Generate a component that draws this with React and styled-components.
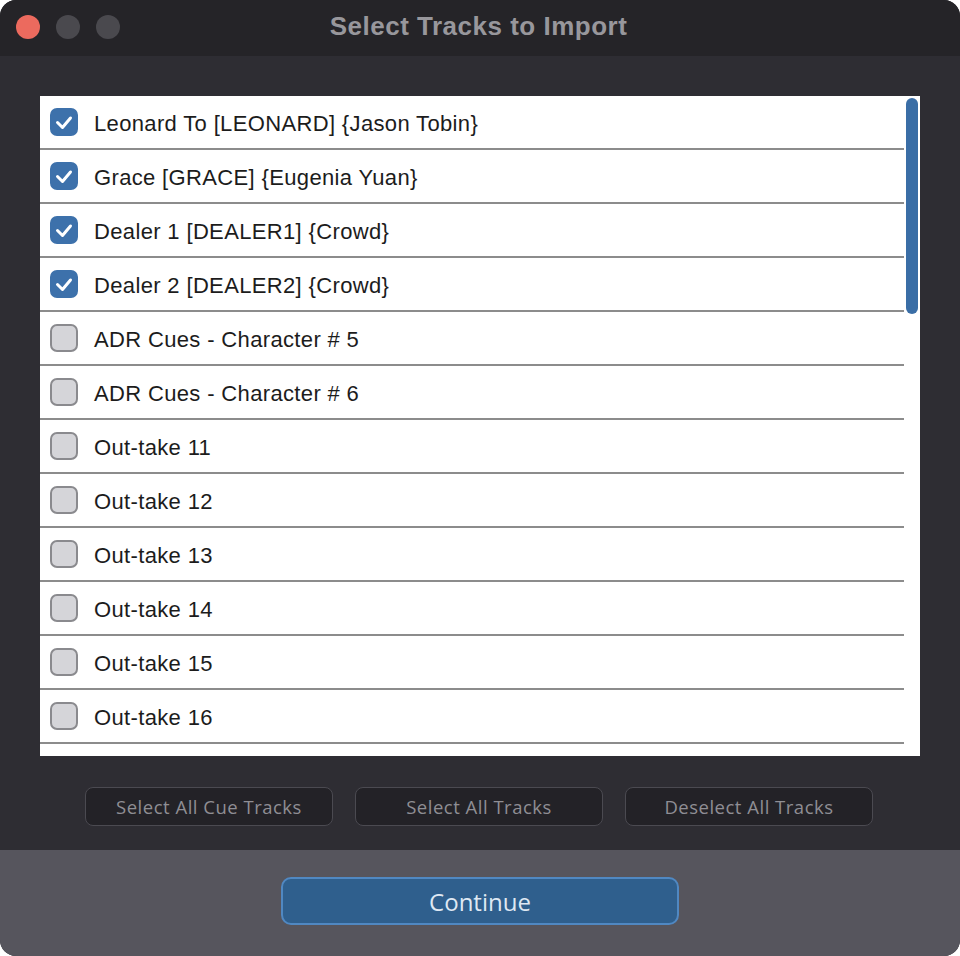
import React, { useState } from "react"
import styled, { createGlobalStyle } from "styled-components"

const GlobalStyle = createGlobalStyle`
  html, body {
    margin: 0;
    padding: 0;
    background: #ffffff;
  }
  * {
    box-sizing: border-box;
  }
`

const Window = styled.div`
  width: 960px;
  height: 956px;
  border-radius: 16px;
  overflow: hidden;
  display: flex;
  flex-direction: column;
  background: #2e2d33;
`

const TitleBar = styled.div`
  height: 56px;
  flex-shrink: 0;
  background: #252428;
  display: flex;
  align-items: center;
  justify-content: center;
  position: relative;
  padding-bottom: 3px;
`

const Lights = styled.div`
  position: absolute;
  left: 16px;
  top: 15px;
  display: flex;
  gap: 16px;
`

const Light = styled.span`
  width: 24px;
  height: 24px;
  border-radius: 50%;
  background: ${(props) => (props.red ? "#ec6a5e" : "#4a494e")};
`

const Title = styled.h1`
  margin: 0;
  margin-right: 3px;
  font-family: "Liberation Sans", Arial, sans-serif;
  font-weight: 700;
  font-size: 26px;
  letter-spacing: 0.5px;
  color: #98979c;
`

const Body = styled.div`
  flex: 1;
  padding: 40px 40px 0 40px;
  display: flex;
  flex-direction: column;
`

const ListBox = styled.div`
  height: 660px;
  background: #ffffff;
  position: relative;
  overflow: hidden;
`

const List = styled.ul`
  list-style: none;
  margin: 0;
  padding: 0;
  width: 864px;
`

const Row = styled.li`
  height: 54px;
  display: flex;
  align-items: center;
  padding-left: 10px;
  border-bottom: 2px solid #8c8c8c;
  cursor: pointer;
`

const Box = styled.span`
  width: 28px;
  height: 28px;
  border-radius: 7px;
  flex-shrink: 0;
  display: flex;
  align-items: center;
  justify-content: center;
  background: ${(props) => (props.checked ? "#3d71ab" : "#d5d5d9")};
  border: 2px solid ${(props) => (props.checked ? "#3d71ab" : "#8a8a8e")};
`

const Label = styled.span`
  margin-left: 16px;
  padding-top: 4px;
  font-family: "Liberation Sans", Arial, sans-serif;
  font-size: 22px;
  letter-spacing: 0.35px;
  color: #1c1c1c;
`

const Scroll = styled.div`
  position: absolute;
  right: 2px;
  top: 2px;
  width: 12px;
  height: 216px;
  border-radius: 6px;
  background: #3a6ea6;
`

const ButtonRow = styled.div`
  display: flex;
  justify-content: center;
  gap: 22px;
  margin-top: 31px;
  padding-right: 2px;
`

const GhostButton = styled.button`
  width: 248px;
  height: 39px;
  border-radius: 8px;
  background: #232227;
  border: 1.5px solid #4b4a51;
  color: #8f8e94;
  font-family: "Open Sans", "DejaVu Sans", sans-serif;
  font-size: 18.5px;
  letter-spacing: 0.5px;
  cursor: pointer;
`

const Footer = styled.div`
  height: 106px;
  flex-shrink: 0;
  background: #56555d;
  display: flex;
  justify-content: center;
  padding-top: 27px;
`

const PrimaryButton = styled.button`
  width: 398px;
  height: 48px;
  border-radius: 10px;
  background: #2f5f8d;
  border: 2px solid #5088c2;
  color: #dfe8f3;
  font-family: "Open Sans", "DejaVu Sans", sans-serif;
  font-size: 24px;
  cursor: pointer;
`

const Check = () => (
  <svg width="24" height="24" viewBox="0 0 24 24">
    <path
      d="M5.5 12.5 L10.5 17.5 L18.5 8"
      fill="none"
      stroke="#ffffff"
      strokeWidth="3"
      strokeLinecap="round"
      strokeLinejoin="round"
    />
  </svg>
)

const initialTracks = [
  { name: "Leonard To [LEONARD] {Jason Tobin}", on: true },
  { name: "Grace [GRACE] {Eugenia Yuan}", on: true },
  { name: "Dealer 1 [DEALER1] {Crowd}", on: true },
  { name: "Dealer 2 [DEALER2] {Crowd}", on: true },
  { name: "ADR Cues - Character # 5", on: false },
  { name: "ADR Cues - Character # 6", on: false },
  { name: "Out-take 11", on: false },
  { name: "Out-take 12", on: false },
  { name: "Out-take 13", on: false },
  { name: "Out-take 14", on: false },
  { name: "Out-take 15", on: false },
  { name: "Out-take 16", on: false },
]

const App = () => {
  const [tracks, setTracks] = useState(initialTracks)

  const toggle = (index) => {
    setTracks(tracks.map((t, i) => (i === index ? { ...t, on: !t.on } : t)))
  }

  const setAll = (fn) => setTracks(tracks.map((t, i) => ({ ...t, on: fn(t, i) })))

  return (
    <>
      <GlobalStyle />
      <Window>
        <TitleBar>
          <Lights>
            <Light red />
            <Light />
            <Light />
          </Lights>
          <Title>Select Tracks to Import</Title>
        </TitleBar>
        <Body>
          <ListBox>
            <List>
              {tracks.map((track, index) => (
                <Row key={track.name} onClick={() => toggle(index)}>
                  <Box checked={track.on}>{track.on && <Check />}</Box>
                  <Label>{track.name}</Label>
                </Row>
              ))}
            </List>
            <Scroll />
          </ListBox>
          <ButtonRow>
            <GhostButton onClick={() => setAll((t, i) => i < 4)}>
              Select All Cue Tracks
            </GhostButton>
            <GhostButton onClick={() => setAll(() => true)}>
              Select All Tracks
            </GhostButton>
            <GhostButton onClick={() => setAll(() => false)}>
              Deselect All Tracks
            </GhostButton>
          </ButtonRow>
        </Body>
        <Footer>
          <PrimaryButton>Continue</PrimaryButton>
        </Footer>
      </Window>
    </>
  )
}

export default App
